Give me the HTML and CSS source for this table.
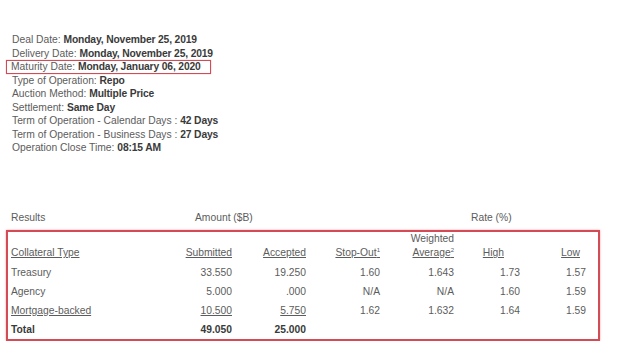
FILE: index.html
```html
<!DOCTYPE html>
<html>
<head>
    <meta charset="UTF-8">
    <title>Repo Operation Results</title>
    <link rel="stylesheet" href="styles.css">
</head>
<body>
    <div class="details">
        <div class="line">Deal Date: <b>Monday, November 25, 2019</b></div>
        <div class="line">Delivery Date: <b>Monday, November 25, 2019</b></div>
        <div class="line"><span class="highlight">Maturity Date: <b>Monday, January 06, 2020</b></span></div>
        <div class="line">Type of Operation: <b>Repo</b></div>
        <div class="line">Auction Method: <b>Multiple Price</b></div>
        <div class="line">Settlement: <b>Same Day</b></div>
        <div class="line">Term of Operation - Calendar Days : <b>42 Days</b></div>
        <div class="line">Term of Operation - Business Days : <b>27 Days</b></div>
        <div class="line">Operation Close Time: <b>08:15 AM</b></div>
    </div>

    <div class="results-head">
        <div class="results-label">Results</div>
        <div class="amount-label">Amount ($B)</div>
        <div class="rate-label">Rate (%)</div>
    </div>

    <div class="results-box">
        <table class="results">
            <colgroup>
                <col class="c-type">
                <col class="c-sub">
                <col class="c-acc">
                <col class="c-stop">
                <col class="c-avg">
                <col class="c-high">
                <col class="c-low">
            </colgroup>
            <thead>
                <tr>
                    <th class="left"><a href="#">Collateral Type</a></th>
                    <th><a href="#">Submitted</a></th>
                    <th><a href="#">Accepted</a></th>
                    <th><a href="#">Stop-Out<sup>1</sup></a></th>
                    <th>Weighted<br><a href="#">Average<sup>2</sup></a></th>
                    <th class="high"><a href="#">High</a></th>
                    <th class="low"><a href="#">Low</a></th>
                </tr>
            </thead>
            <tbody>
                <tr>
                    <td class="left">Treasury</td>
                    <td>33.550</td>
                    <td>19.250</td>
                    <td>1.60</td>
                    <td>1.643</td>
                    <td>1.73</td>
                    <td>1.57</td>
                </tr>
                <tr>
                    <td class="left">Agency</td>
                    <td>5.000</td>
                    <td>.000</td>
                    <td>N/A</td>
                    <td>N/A</td>
                    <td>1.60</td>
                    <td>1.59</td>
                </tr>
                <tr>
                    <td class="left"><a href="#">Mortgage-backed</a></td>
                    <td><a href="#">10.500</a></td>
                    <td><a href="#">5.750</a></td>
                    <td>1.62</td>
                    <td>1.632</td>
                    <td>1.64</td>
                    <td>1.59</td>
                </tr>
                <tr class="total">
                    <td class="left">Total</td>
                    <td>49.050</td>
                    <td>25.000</td>
                    <td></td>
                    <td></td>
                    <td></td>
                    <td></td>
                </tr>
            </tbody>
        </table>
    </div>
</body>
</html>
```

FILE: styles.css
```css
body {
    font-family: "Liberation Sans", Arial, sans-serif;
    font-size: 10.3px;
    color: #5c5c5c;
    background-color: #FFFFFF;
    margin: 0;
    padding: 33px 0 0 0;
}
b {
    color: #3a3a3a;
    letter-spacing: -0.15px;
}
a {
    color: #5c5c5c;
    text-decoration: underline;
}
.details {
    padding-left: 12px;
}
.line {
    line-height: 13.5px;
    height: 13.5px;
}
.highlight {
    display: inline-block;
    margin-left: -6px;
    padding: 0 9px 0 4px;
    line-height: 11.5px;
    border: 1px solid #d44a55;
    box-shadow: 0 0 1px rgba(212, 74, 85, 0.6);
}
.results-head {
    display: flex;
    margin-top: 56px;
    line-height: 14px;
    padding-left: 11px;
}
.results-label {
    width: 184px;
}
.amount-label {
    width: 276px;
}
.results-box {
    margin: 5px 0 0 6px;
    width: 590px;
    height: 107px;
    border: 2px solid #d44a55;
    box-shadow: 0 0 2px rgba(212, 74, 85, 0.5);
}
.results {
    border-collapse: collapse;
    table-layout: fixed;
    margin-left: 3px;
    width: 575px;
}
.c-type { width: 149px; }
.c-sub { width: 72px; }
.c-acc { width: 74px; }
.c-stop { width: 74px; }
.c-avg { width: 74px; }
.c-high { width: 66px; }
.c-low { width: 66px; }
.results th,
.results td {
    padding: 0;
    text-align: right;
    font-weight: normal;
    white-space: nowrap;
}
.results th {
    line-height: 14.5px;
    vertical-align: bottom;
    padding-bottom: 2px;
}
.results td {
    height: 19px;
    line-height: 19px;
}
.results .left {
    text-align: left;
}
.results th.high {
    padding-right: 16px;
}
.results th.low {
    padding-right: 6px;
}
sup {
    font-size: 6px;
    line-height: 0;
    vertical-align: 4px;
}
.total td {
    font-weight: bold;
    color: #3a3a3a;
}
```
